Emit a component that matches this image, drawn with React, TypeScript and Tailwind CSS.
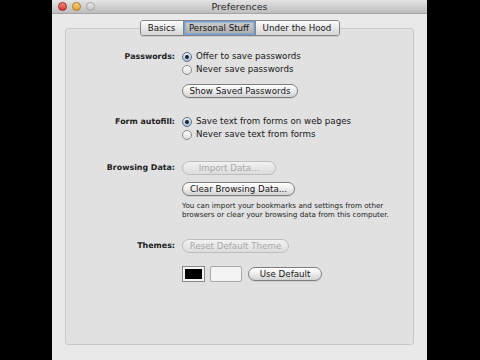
import React from "react";

const font = { fontFamily: '"DejaVu Sans", "Lucida Grande", sans-serif' };

function Radio({ checked, label }: { checked?: boolean; label: string }) {
  return (
    <div className="flex h-[13px] items-center gap-[4px]">
      <span
        className={
          "flex h-[10px] w-[10px] items-center justify-center rounded-full border " +
          (checked
            ? "border-[#5a6f8c] bg-gradient-to-b from-[#e6eef8] to-[#a9bdd6]"
            : "border-[#8c8c8c] bg-gradient-to-b from-[#ffffff] to-[#dedede]")
        }
      >
        {checked && <span className="h-[4px] w-[4px] rounded-full bg-[#1c2430]" />}
      </span>
      <span className="text-[8.7px] leading-none text-[#161616]">{label}</span>
    </div>
  );
}

function Btn({ label, disabled, w }: { label: string; disabled?: boolean; w: string }) {
  return (
    <div
      className={
        "flex h-[14px] items-center justify-center rounded-full border text-[8.7px] leading-none " +
        w +
        " " +
        (disabled
          ? "border-[#bdbdbd] bg-gradient-to-b from-[#f2f2f2] to-[#dcdcdc] text-[#a8a8a8]"
          : "border-[#7e7e7e] bg-gradient-to-b from-[#ffffff] via-[#ececec] to-[#d2d2d2] text-[#161616] shadow-[0_1px_0_rgba(0,0,0,0.08)]")
      }
    >
      {label}
    </div>
  );
}

function Label({ children }: { children: React.ReactNode }) {
  return (
    <div className="flex h-[13px] items-center justify-end text-[7.9px] font-bold leading-none text-[#222]">
      {children}
    </div>
  );
}

export default function App() {
  return (
    <div className="flex h-[360px] w-[480px] bg-black" style={font}>
      <div className="ml-[52px] flex h-[360px] w-[375px] flex-col bg-[#e9e9e9]">
        <div className="relative flex h-[14px] items-center justify-center border-b border-[#a4a4a4] bg-gradient-to-b from-[#e4e4e4] to-[#bdbdbd]">
          <div className="absolute left-[6px] top-[2px] flex gap-[5px]">
            <span className="h-[9px] w-[9px] rounded-full border border-[#9b2a2a] bg-gradient-to-b from-[#f38a85] to-[#d6302b]" />
            <span className="h-[9px] w-[9px] rounded-full border border-[#a8782a] bg-gradient-to-b from-[#fcd27b] to-[#e3a02b]" />
            <span className="h-[9px] w-[9px] rounded-full border border-[#a6a6a6] bg-gradient-to-b from-[#e8e8e8] to-[#c4c4c4]" />
          </div>
          <span className="text-[9.5px] leading-none text-[#2a2a2a]">Preferences</span>
        </div>

        <div className="flex flex-1 flex-col px-[13px] pb-[15px] pt-[6px]">
          <div className="relative z-10 flex justify-center text-[8.7px] leading-none text-[#161616]">
            <div className="flex h-[16px] overflow-hidden rounded-[3px] border border-[#858585] shadow-[0_1px_0_rgba(0,0,0,0.1)]">
              <div className="flex w-[42px] items-center justify-center bg-gradient-to-b from-[#fbfbfb] to-[#d6d6d6]">
                Basics
              </div>
              <div className="flex w-[73px] items-center justify-center border-x border-[#858585] bg-gradient-to-b from-[#cfcfcf] to-[#a9a9a9] shadow-[inset_0_0_0_1.5px_#6f9fd6]">
                Personal Stuff
              </div>
              <div className="flex w-[83px] items-center justify-center bg-gradient-to-b from-[#fbfbfb] to-[#d6d6d6]">
                Under the Hood
              </div>
            </div>
          </div>

          <div className="-mt-[8px] flex-1 rounded-[3px] border border-[#c9c9c9] bg-[#e1e1e1] pt-[21px]">
            <div className="grid grid-cols-[109px_1fr] gap-x-[7px]">
              <Label>Passwords:</Label>
              <div className="flex flex-col">
                <Radio checked label="Offer to save passwords" />
                <Radio label="Never save passwords" />
                <div className="mt-[8px]">
                  <Btn label="Show Saved Passwords" w="w-[116px]" />
                </div>
              </div>

              <div className="mt-[17px]">
                <Label>Form autofill:</Label>
              </div>
              <div className="mt-[17px] flex flex-col">
                <Radio checked label="Save text from forms on web pages" />
                <Radio label="Never save text from forms" />
              </div>

              <div className="mt-[20px] flex h-[14px] items-center justify-end">
                <Label>Browsing Data:</Label>
              </div>
              <div className="mt-[20px] flex flex-col">
                <Btn label="Import Data..." disabled w="w-[94px]" />
                <div className="mt-[7px]">
                  <Btn label="Clear Browsing Data..." w="w-[113px]" />
                </div>
                <p className="mt-[5px] text-[7.2px] leading-[9px] text-[#1c1c1c]">
                  You can import your bookmarks and settings from other
                  <br />
                  browsers or clear your browsing data from this computer.
                </p>
              </div>

              <div className="mt-[20px] flex h-[14px] items-center justify-end">
                <Label>Themes:</Label>
              </div>
              <div className="mt-[20px] flex flex-col">
                <Btn label="Reset Default Theme" disabled w="w-[107px]" />
                <div className="mt-[13px] flex items-center gap-[5px]">
                  <div className="flex h-[16px] w-[23px] items-center justify-center border border-[#8a8a8a] bg-[#f4f4f4]">
                    <div className="h-[10px] w-[17px] bg-black" />
                  </div>
                  <div className="h-[16px] w-[32px] rounded-[2px] border border-[#a9a9a9] bg-[#f4f4f4]" />
                  <div className="ml-[1px]">
                    <Btn label="Use Default" w="w-[74px]" />
                  </div>
                </div>
              </div>
            </div>
          </div>
        </div>
      </div>
    </div>
  );
}
